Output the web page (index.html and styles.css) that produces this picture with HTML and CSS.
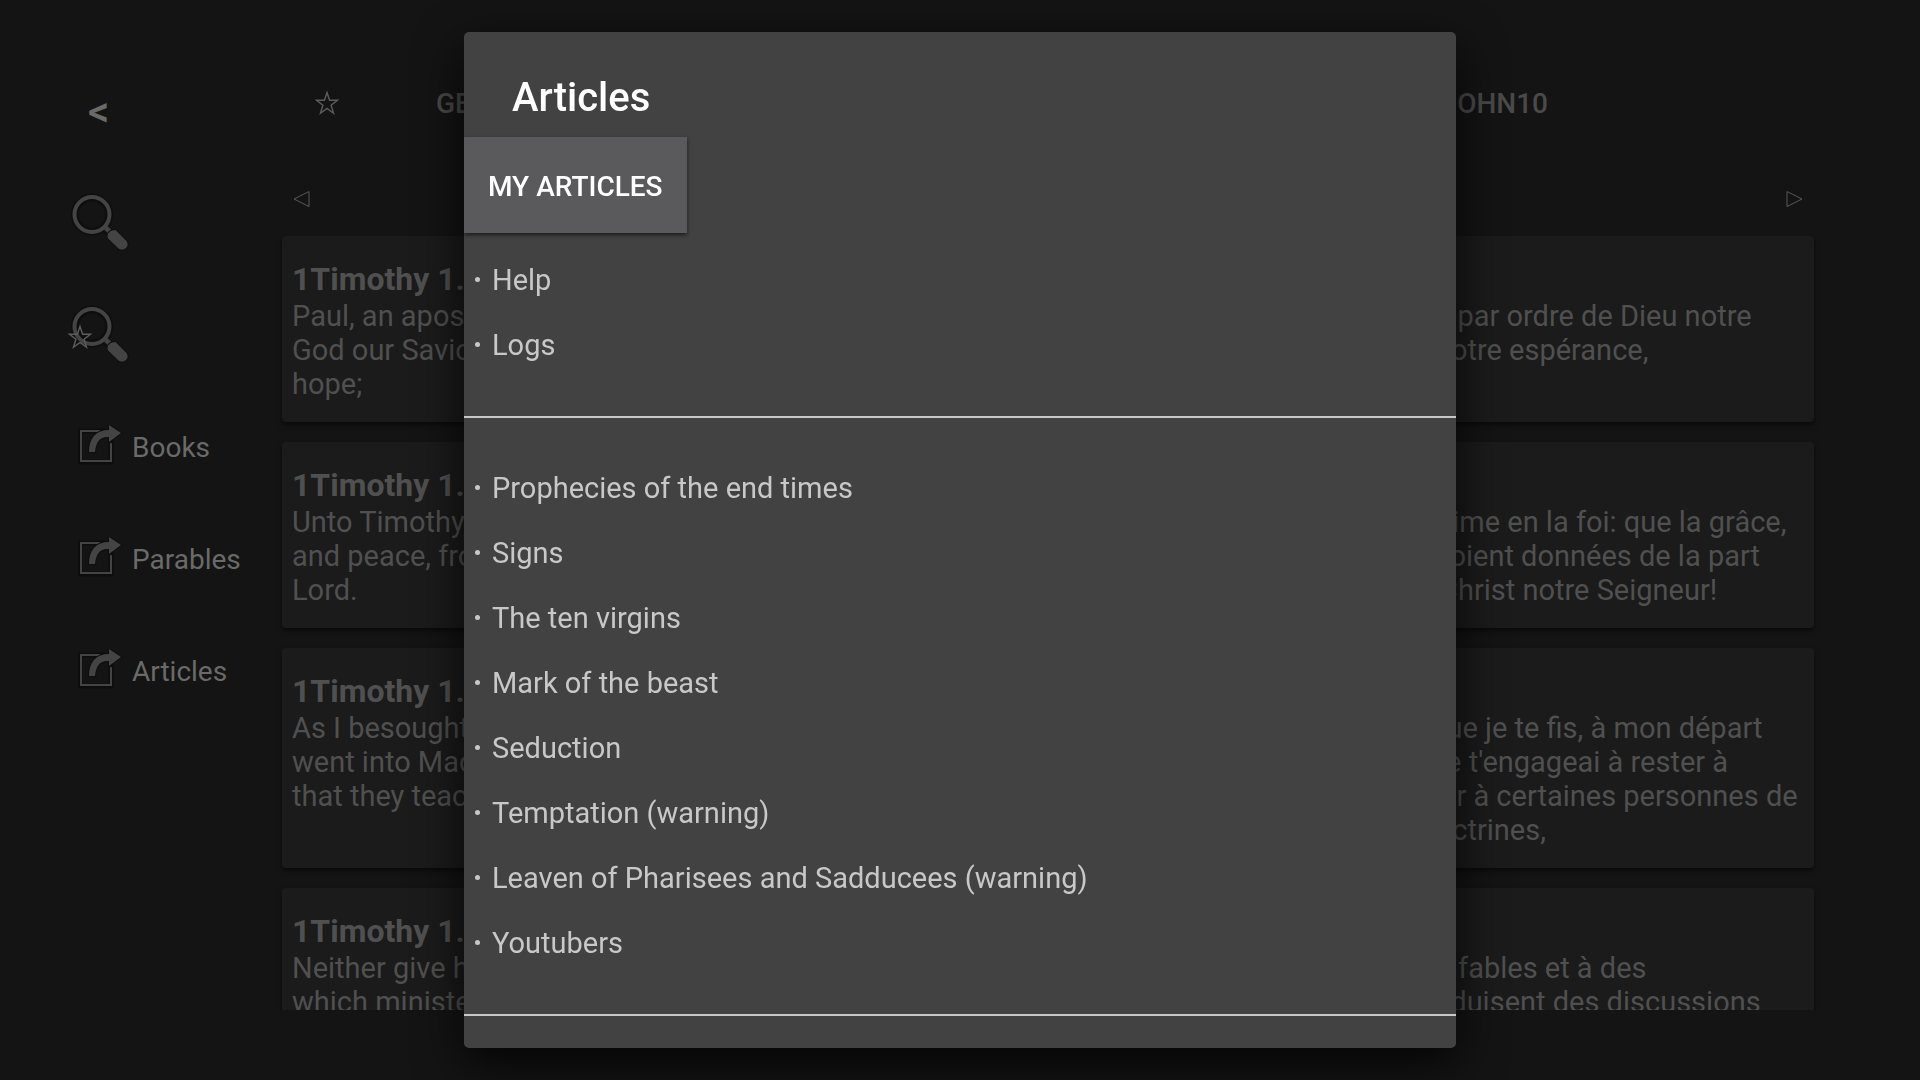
FILE: index.html
```
<!DOCTYPE html>
<html lang="en">
<head>
    <meta charset="UTF-8">
    <meta name="viewport" content="width=device-width, initial-scale=1.0">
    <title>Articles</title>
    <link rel="stylesheet" href="styles.css">
</head>
<body>
    <svg class="defs" aria-hidden="true">
        <symbol id="search" viewBox="0 0 64 64">
            <g stroke="#0e0e0e" stroke-width="8" fill="none">
                <circle cx="24" cy="23.500" r="17"/>
                <path d="M36 36l7 7"/>
            </g>
            <path d="M36 35l7 7" stroke="#444" stroke-width="5"/>
            <path d="M40 42.500l2-2q1.500-1.500 5.500-1.500l11 11q2.500 4-.5 7t-7 1l-11-10.500q-1-2.500 0-5z" fill="#444" stroke="#0e0e0e" stroke-width="2" paint-order="stroke"/>
            <circle cx="24" cy="23.500" r="17.500" fill="none" stroke="#444" stroke-width="4"/>
        </symbol>
        <symbol id="share" viewBox="1 2 44 44">
            <path d="M3 8h31v31H3z" fill="none" stroke="#0d0d0d" stroke-width="5"/>
            <path d="M23 8H4v30h30V20" fill="none" stroke="#444" stroke-width="2"/>
            <path d="M12 29C12 15 19 7 32 7V2l12 8-12 9v-5C22 13 19 20 18 29z" fill="#444" stroke="#0e0e0e" stroke-width="2" paint-order="stroke"/>
        </symbol>
        <symbol id="star" viewBox="0 0 24 24">
            <path d="M12 3l2.200 6.700H21l-5.500 4.200 2.100 6.900-5.600-4.200-5.600 4.200 2.100-6.900L3 9.700h6.800z" fill="none" stroke="#5c5c5c" stroke-width="1.200"/>
        </symbol>
    </svg>

    <div class="app">
        <nav class="sidebar">
            <button class="side-item back">&lt;</button>
            <button class="side-item" aria-label="Search">
                <svg class="search-icon"><use href="#search"/></svg>
            </button>
            <button class="side-item" aria-label="Search favorites">
                <svg class="search-icon"><use href="#search"/></svg>
                <svg class="star badge"><use href="#star"/></svg>
            </button>
            <a class="side-item" href="#books"><svg class="share-icon"><use href="#share"/></svg>Books</a>
            <a class="side-item" href="#parables"><svg class="share-icon"><use href="#share"/></svg>Parables</a>
            <a class="side-item" href="#articles"><svg class="share-icon"><use href="#share"/></svg>Articles</a>
        </nav>

        <main class="content">
            <div class="tabs">
                <button aria-label="Favorites"><svg class="star"><use href="#star"/></svg></button>
                <button class="tab">GENESIS1</button>
                <button class="tab last">JOHN10</button>
            </div>
            <div class="pager">
                <button aria-label="Previous"><svg class="arrow" viewBox="0 0 18 18"><path d="M16 1.500v15L1 9z"/></svg></button>
                <button aria-label="Next"><svg class="arrow" viewBox="0 0 18 18"><path d="M2 1.500v15L17 9z"/></svg></button>
            </div>
            <div class="verses">
                <article class="card">
                    <div>
                        <h2>1Timothy 1.1</h2>
                        <p>Paul, an apostle of Jesus Christ by the<br>God our Saviour, and Lord Jesus Christ,<br>hope;</p>
                    </div>
                    <p lang="fr">Paul, apôtre de Jésus-Christ, par ordre de Dieu notre<br>Sauveur et de Jésus-Christ notre espérance,</p>
                </article>
                <article class="card">
                    <div>
                        <h2>1Timothy 1.2</h2>
                        <p>Unto Timothy, my own son in the faith:<br>and peace, from God our Father and<br>Lord.</p>
                    </div>
                    <p lang="fr">à Timothée, mon enfant légitime en la foi: que la grâce,<br>la miséricorde et la paix, te soient données de la part<br>de Dieu le Père et de Jésus-Christ notre Seigneur!</p>
                </article>
                <article class="card">
                    <div>
                        <h2>1Timothy 1.3</h2>
                        <p>As I besought thee to abide still at<br>went into Macedonia, that thou mightest<br>that they teach no other doctrine,</p>
                    </div>
                    <p lang="fr">Je te rappelle l'exhortation que je te fis, à mon départ<br>pour la Macédoine, lorsque je t'engageai à rester à<br>Éphèse, afin de recommander à certaines personnes de<br>ne pas enseigner d'autres doctrines,</p>
                </article>
                <article class="card">
                    <div>
                        <h2>1Timothy 1.4</h2>
                        <p>Neither give heed to fables and endless<br>which minister questions, rather than</p>
                    </div>
                    <p lang="fr">et de ne pas s'attacher à des fables et à des<br>généalogies sans fin, qui produisent des discussions</p>
                </article>
            </div>
        </main>
    </div>

    <div class="modal" role="dialog" aria-labelledby="modalTitle">
        <h1 id="modalTitle">Articles</h1>
        <button class="my-articles">MY ARTICLES</button>
        <ul>
            <li><a href="#help">Help</a></li>
            <li><a href="#logs">Logs</a></li>
        </ul>
        <hr>
        <ul>
            <li><a href="#prophecies">Prophecies of the end times</a></li>
            <li><a href="#signs">Signs</a></li>
            <li><a href="#virgins">The ten virgins</a></li>
            <li><a href="#mark">Mark of the beast</a></li>
            <li><a href="#seduction">Seduction</a></li>
            <li><a href="#temptation">Temptation (warning)</a></li>
            <li><a href="#leaven">Leaven of Pharisees and Sadducees (warning)</a></li>
            <li><a href="#youtubers">Youtubers</a></li>
        </ul>
        <hr>
    </div>
</body>
</html>
```
FILE: styles.css
```
* {
    box-sizing: border-box;
}
body {
    font-family: Roboto, sans-serif;
    font-size: 28px;
    background-color: #141414;
    color: #505050;
    margin: 0;
    overflow: hidden;
}
button {
    font: inherit;
    color: inherit;
    background: none;
    border: none;
    padding: 0;
    cursor: pointer;
}
a {
    color: inherit;
    text-decoration: none;
}
h1, h2, p, ul {
    margin: 0;
    padding: 0;
}
svg {
    display: block;
    flex: none;
}
.defs {
    position: absolute;
    width: 0;
    height: 0;
}
.app {
    display: flex;
    height: 100vh;
}

/* left menu */
.sidebar {
    flex: none;
    width: 282px;
    padding: 55px 0 0 68px;
    color: #6a6a6a;
}
.side-item {
    display: flex;
    align-items: center;
    width: 100%;
    height: 112px;
    position: relative;
}
.back {
    font-size: 42px;
    font-weight: 500;
    padding-left: 20px;
}
.search-icon {
    width: 64px;
    height: 64px;
}
.share-icon {
    width: 44px;
    height: 44px;
    margin: 0 10px;
}
.star {
    width: 28px;
    height: 28px;
}
.badge {
    position: absolute;
    left: -2px;
    top: 44px;
}

/* verses */
.content {
    flex: 1;
    display: flex;
    flex-direction: column;
    min-width: 0;
    padding: 48px 106px 70px 0;
}
.tabs {
    display: flex;
    align-items: center;
    flex: none;
    height: 114px;
    padding: 0 266px 4px 31px;
    font-weight: 500;
    color: #4a4a4a;
}
.tab {
    margin-left: 95px;
}
.last {
    margin-left: auto;
}
.pager {
    display: flex;
    align-items: center;
    justify-content: space-between;
    flex: none;
    height: 74px;
    padding: 0 11px;
}
.arrow {
    width: 18px;
    height: 18px;
    fill: none;
    stroke: #585858;
    stroke-width: 1;
}
.verses {
    flex: 1;
    min-height: 0;
    overflow: hidden;
    /* room for the card shadows at the sides */
    margin: 0 -8px;
    padding: 0 8px;
}
.card {
    display: grid;
    grid-template-columns: 1fr 1fr;
    padding: 24px 10px 21px;
    margin-bottom: 20px;
    background: #1b1b1b;
    border-radius: 4px;
    box-shadow: 0 3px 5px rgba(0, 0, 0, 0.5);
}
.card h2 {
    margin-bottom: 1px;
    font-size: 32px;
    line-height: 38px;
}
.card p {
    font-size: 29px;
    line-height: 34px;
    white-space: nowrap;
}
.card > p {
    padding: 39px 0 0 36px;
}

/* dialog */
.modal {
    position: fixed;
    top: 32px;
    bottom: 32px;
    left: 0;
    right: 0;
    width: 992px;
    max-width: 90%;
    margin: 0 auto;
    overflow: hidden;
    background: #424242;
    color: #c8c8c8;
    border-radius: 5px;
    box-shadow: 0 16px 48px rgba(0, 0, 0, 0.8);
}
.modal h1 {
    padding: 42px 48px 15px;
    font-size: 40px;
    line-height: 48px;
    font-weight: 500;
    color: #fff;
}
.my-articles {
    display: block;
    height: 96px;
    padding: 2px 24px 0;
    margin-bottom: 14px;
    background: #5a5a5c;
    color: #fff;
    font-weight: 500;
    box-shadow: 0 2px 4px rgba(0, 0, 0, 0.6);
}
.modal ul {
    list-style: none;
    font-size: 29px;
}
.modal li {
    display: flex;
    align-items: center;
    height: 65px;
    padding-left: 11px;
}
.modal li::before {
    content: "";
    width: 5px;
    height: 5px;
    margin-right: 12px;
    border-radius: 50%;
    background: #c8c8c8;
}
.modal hr {
    height: 2px;
    margin: 39px 0 37px;
    border: none;
    background: #c8c8c8;
}
```
